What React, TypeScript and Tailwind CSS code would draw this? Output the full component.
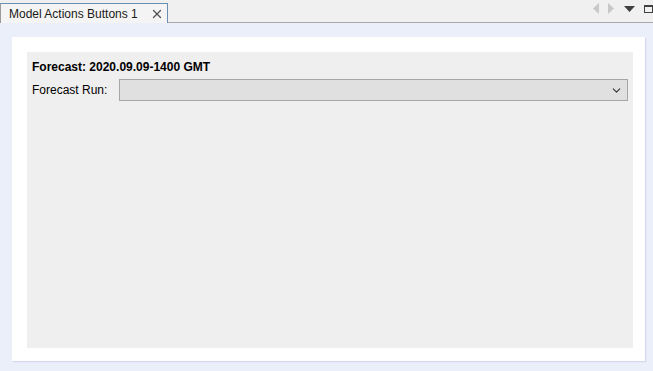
import { ChevronDown, X } from "lucide-react";

/** タブ右上のナビゲーションアイコン */
function TabNav() {
    return (
        <div className="flex flex-row items-center gap-[7px] pr-0 pt-[3px]">
            <svg width="7" height="11" viewBox="0 0 7 11">
                <polygon points="6,0 0,5.5 6,11" fill="#c8c8c8" />
            </svg>
            <svg width="7" height="11" viewBox="0 0 7 11">
                <polygon points="1,0 7,5.5 1,11" fill="#c8c8c8" />
            </svg>
            <svg width="11" height="6" viewBox="0 0 11 6" className="ml-[3px]">
                <polygon points="0,0 11,0 5.5,6" fill="#404040" />
            </svg>
            <div className="w-[9px] h-[8px] border border-[#404040] border-t-2 ml-[2px]" />
        </div>
    )
}

export default function App() {
    return (
        <div
            className="w-[653px] h-[371px] flex flex-col bg-[#eaeff9] overflow-hidden"
            style={{ fontFamily: '"Liberation Sans", Arial, sans-serif' }}
        >
            <div className="h-[23px] flex flex-row justify-between items-start bg-[#f0f0f0] border-b border-[#a8a8a8]">
                <div className="mt-[3px] h-[20px] w-[168px] flex flex-row items-center justify-between pl-[8px] pr-[3px] bg-[#f4f4f4] border-r border-t border-[#6a8fb5] border-l border-l-[#9a9a9a] text-[12px] text-[#1a1a1a]">
                    <span>Model Actions Buttons 1</span>
                    <X size={14} strokeWidth={2.2} color="#505050" />
                </div>
                <TabNav />
            </div>

            <div className="flex-1 pl-[12px] pr-[8px] pt-[14px] pb-[10px]">
                <div className="h-full bg-white pl-[15px] pr-[12px] pt-[15px] pb-[13px] shadow-[1px_1px_1px_#d6d6ee]">
                    <div className="h-full bg-[#efefef] pl-[5px] pr-[5px] pt-[8px] text-[12px] text-black">
                        <div className="font-bold leading-[14px]">Forecast: 2020.09.09-1400 GMT</div>
                        <div className="flex flex-row items-center mt-[5px]">
                            <span className="w-[87px]">Forecast Run:</span>
                            <div className="flex-1 h-[22px] bg-[#e0e0e0] border border-[#a6a6a6] flex flex-row items-center justify-end pr-[4px]">
                                <ChevronDown size={13} strokeWidth={2} color="#333" />
                            </div>
                        </div>
                    </div>
                </div>
            </div>
        </div>
    )
}
